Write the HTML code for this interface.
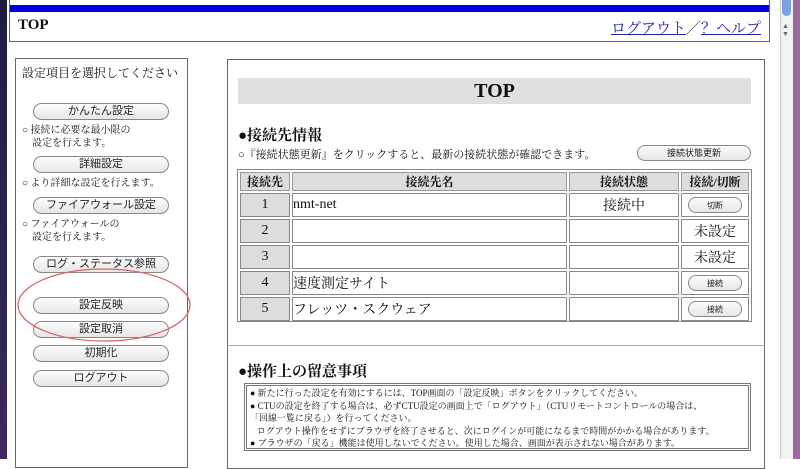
<!DOCTYPE html>
<html><head><meta charset="utf-8"><style>
*{margin:0;padding:0;box-sizing:border-box}
body{width:800px;height:459px;overflow:hidden;background:#fff;position:relative;font-family:"Liberation Serif","Noto Serif CJK SC","Noto Sans CJK JP",serif;color:#111}
.a{position:absolute}
.btn{position:absolute;border:1px solid #888;border-radius:9px;background:linear-gradient(#fdfdfd,#e6e6e6);text-align:center;font-family:"Liberation Sans","Noto Sans CJK JP",sans-serif;font-size:11px;line-height:15px;color:#222}
.note{font-size:10px;line-height:13px}
td{border:1px solid #888;font-size:14px;height:24px}
table{border-collapse:separate;border-spacing:2px}
th{background:#ddd;border:1px solid #999;font-size:12px;font-weight:bold;height:19px}
td.n{background:#ddd;text-align:center}
</style></head><body>
<div class="a" style="left:0;top:0;width:7px;height:459px;background:linear-gradient(#1c1c40,#3a2a60)"></div>
<div class="a" style="left:793px;top:0;width:7px;height:459px;background:#9a6aa0"></div>
<div class="a" style="left:780px;top:0;width:13px;height:459px;background:#f2f2f2;border-left:1px solid #ccc"></div>
<div class="a" style="left:782px;top:0;width:9px;height:16px;background:#7aa2e0;border-radius:0 0 5px 5px"></div>
<div class="a" style="left:782px;top:22px;font-size:7px;color:#666">▲<br>▼</div>
<div class="a" style="left:9px;top:-2px;width:761px;height:44px;border:1px solid #666"></div>
<div class="a" style="left:10px;top:5px;width:759px;height:7px;background:#0000e0"></div>
<div class="a" style="left:18px;top:17px;font-size:15px;font-weight:bold">TOP</div>
<div class="a" style="left:611px;top:17px;font-size:15px;color:#2222aa"><u>ログアウト</u><span style="color:#333">／</span><u>？ヘルプ</u></div>
<div class="a" style="left:15px;top:58px;width:173px;height:410px;border:1px solid #666"></div>
<div class="a" style="left:22px;top:64px;font-size:12px">設定項目を選択してください</div>
<div class="btn" style="left:33px;top:103px;width:136px;height:17px">かんたん設定</div>
<div class="a note" style="left:22px;top:124px">○ 接続に必要な最小限の<br>&nbsp;&nbsp;&nbsp;&nbsp;設定を行えます。</div>
<div class="btn" style="left:33px;top:156px;width:136px;height:17px">詳細設定</div>
<div class="a note" style="left:22px;top:177px">○ より詳細な設定を行えます。</div>
<div class="btn" style="left:33px;top:197px;width:136px;height:17px">ファイアウォール設定</div>
<div class="a note" style="left:22px;top:218px">○ ファイアウォールの<br>&nbsp;&nbsp;&nbsp;&nbsp;設定を行えます。</div>
<div class="btn" style="left:33px;top:256px;width:136px;height:17px">ログ・ステータス参照</div>
<div class="btn" style="left:33px;top:297px;width:136px;height:17px">設定反映</div>
<div class="btn" style="left:33px;top:321px;width:136px;height:17px">設定取消</div>
<div class="btn" style="left:33px;top:345px;width:136px;height:17px">初期化</div>
<div class="btn" style="left:33px;top:370px;width:136px;height:17px">ログアウト</div>
<svg class="a" style="left:0;top:0" width="800" height="459"><ellipse cx="104" cy="305" rx="86" ry="36" fill="none" stroke="#d66" stroke-width="1.3"/></svg>
<div class="a" style="left:227px;top:59px;width:538px;height:410px;border:1px solid #666"></div>
<div class="a" style="left:238px;top:78px;width:513px;height:26px;background:#e0e0e0;text-align:center;font-size:20px;font-weight:bold;line-height:26px">TOP</div>
<div class="a" style="left:238px;top:124px;font-size:15px;font-weight:bold">●接続先情報</div>
<div class="a" style="left:238px;top:146px;font-size:11px">○『接続状態更新』をクリックすると、最新の接続状態が確認できます。</div>
<div class="btn" style="left:637px;top:145px;width:114px;height:16px;font-size:9px">接続状態更新</div>
<div class="a" style="left:237px;top:169px;width:515px;height:153px;border:1px solid #888">
<table style="width:513px">
<tr><th style="width:50px">接続先</th><th>接続先名</th><th style="width:110px">接続状態</th><th style="width:68px">接続/切断</th></tr>
<tr><td class="n">1</td><td>nmt-net</td><td style="text-align:center">接続中</td><td><div class="btn" style="position:relative;margin:0 auto;width:54px;height:16px;font-size:8px">切断</div></td></tr>
<tr><td class="n">2</td><td></td><td></td><td style="text-align:center">未設定</td></tr>
<tr><td class="n">3</td><td></td><td></td><td style="text-align:center">未設定</td></tr>
<tr><td class="n">4</td><td>速度測定サイト</td><td></td><td><div class="btn" style="position:relative;margin:0 auto;width:54px;height:16px;font-size:8px">接続</div></td></tr>
<tr><td class="n">5</td><td>フレッツ・スクウェア</td><td></td><td><div class="btn" style="position:relative;margin:0 auto;width:54px;height:16px;font-size:8px">接続</div></td></tr>
</table></div>
<div class="a" style="left:227px;top:345px;width:538px;height:1px;background:#aaa"></div>
<div class="a" style="left:238px;top:360px;font-size:15px;font-weight:bold">●操作上の留意事項</div>
<div class="a" style="left:244px;top:383px;width:507px;height:68px;border:3px double #777;padding:1px 3px;font-size:9px;line-height:12.5px">
● 新たに行った設定を有効にするには、TOP画面の「設定反映」ボタンをクリックしてください。<br>
● CTUの設定を終了する場合は、必ずCTU設定の画面上で「ログアウト」（CTUリモートコントロールの場合は、<br>「回線一覧に戻る」）を行ってください。<br>
&nbsp;&nbsp;&nbsp;ログアウト操作をせずにブラウザを終了させると、次にログインが可能になるまで時間がかかる場合があります。<br>
● ブラウザの「戻る」機能は使用しないでください。使用した場合、画面が表示されない場合があります。</div>
</body></html>
